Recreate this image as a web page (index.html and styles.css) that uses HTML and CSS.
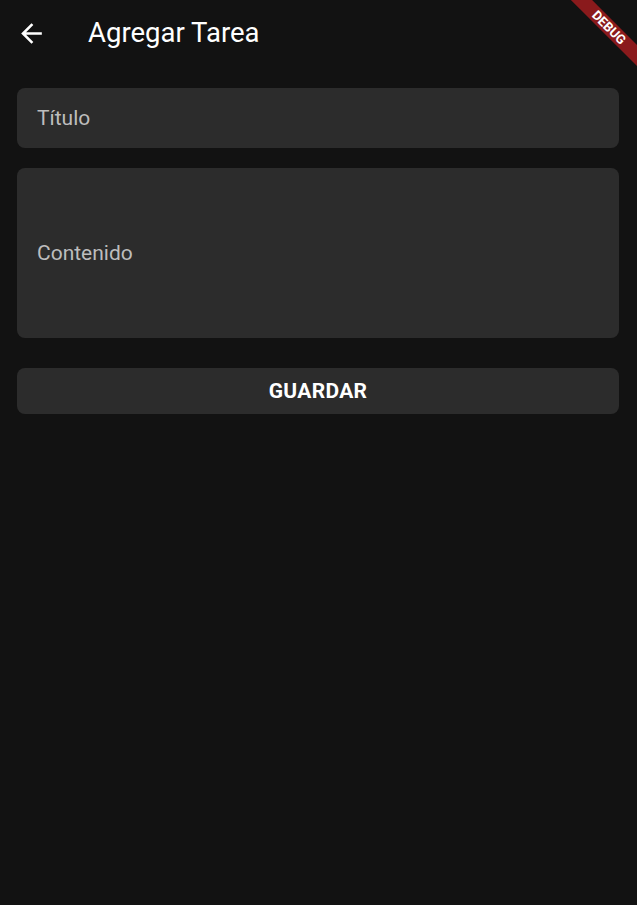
FILE: index.html
```html
<!DOCTYPE html>
<html lang="es">
<head>
<meta charset="utf-8">
<link rel="stylesheet" href="styles.css">
</head>
<body>
<div class="app">
  <header class="appbar">
    <button class="back" aria-label="Atrás">
      <svg viewBox="0 0 24 24"><path fill="#fff" d="M20 11H7.83l5.59-5.59L12 4l-8 8 8 8 1.41-1.41L7.83 13H20v-2z"/></svg>
    </button>
    <h1 class="title">Agregar Tarea</h1>
  </header>
  <main class="form">
    <div class="field field-title"><span class="label">Título</span></div>
    <div class="field field-content"><span class="label">Contenido</span></div>
    <button class="save">GUARDAR</button>
  </main>
  <div class="debug"><span>DEBUG</span></div>
</div>
</body>
</html>
```

FILE: styles.css
```css
* { box-sizing: border-box; }
html, body { margin: 0; padding: 0; background: #121212; }
body { font-family: Roboto, "Noto Sans", sans-serif; color: #fff; }
.app { position: relative; width: 637px; height: 905px; overflow: hidden; background: #121212; }
.appbar { height: 66px; display: flex; align-items: center; padding-left: 16px; }
.back { width: 31px; height: 31px; padding: 0; margin: 0; border: 0; background: none; display: flex; align-items: center; justify-content: center; }
.back svg { width: 31px; height: 31px; flex: none; display: block; }
.title { margin: 0 0 0 41px; font-size: 27.5px; font-weight: 400; letter-spacing: 0; line-height: 1; }
.form { padding: 22px 18px 0 17px; display: flex; flex-direction: column; }
.field { background: #2c2c2c; border-radius: 8px; display: flex; align-items: center; padding-left: 20px; }
.field-title { height: 60px; }
.field-content { height: 170px; margin-top: 20px; }
.label { color: #bdbdbd; font-size: 21px; }
.save { margin-top: 30px; height: 46px; border: 0; border-radius: 8px; background: #2c2c2c; color: #fff; font-family: Roboto, sans-serif; font-weight: 700; font-size: 21px; letter-spacing: 0.3px; padding: 0; }
.debug { position: absolute; top: 0; right: 0; width: 100px; height: 100px; overflow: hidden; pointer-events: none; }
.debug span { position: absolute; left: 2px; top: 20px; width: 140px; height: 15px; transform: rotate(45deg); background: #8a1a1c; color: #fff; font-size: 13px; font-weight: 700; text-align: center; line-height: 15px; }
```
